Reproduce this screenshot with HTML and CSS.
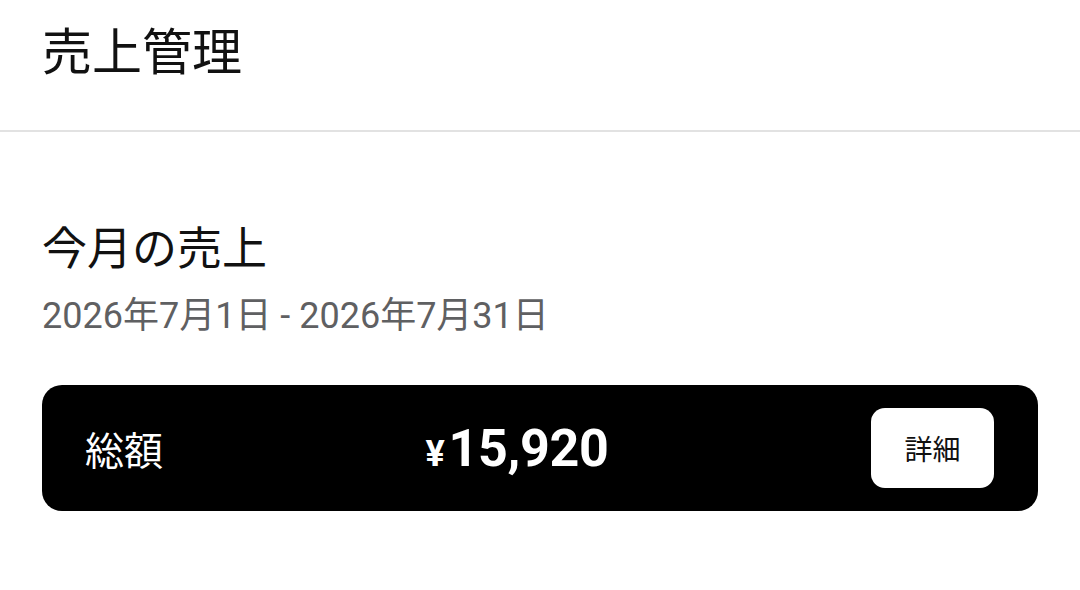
FILE: index.html
```html
<!DOCTYPE html>
<html lang="ja">
<head>
<meta charset="utf-8">
<link rel="stylesheet" href="styles.css">
</head>
<body>
<header class="topbar">
  <h1 class="title">売上管理</h1>
</header>
<main class="content">
  <h2 class="section-title">今月の売上</h2>
  <p class="period">2026年7月1日 - 2026年7月31日</p>
  <div class="total-card">
    <span class="total-label">総額</span>
    <span class="total-amount"><span class="yen">¥</span>15,920</span>
    <button class="detail-btn">詳細</button>
  </div>
</main>
</body>
</html>
```

FILE: styles.css
```css
html, body {
  margin: 0;
  padding: 0;
  background: #ffffff;
}
body {
  width: 1080px;
  height: 590px;
  overflow: hidden;
  font-family: Roboto, "Noto Sans CJK JP", sans-serif;
  color: #111;
}
.topbar {
  height: 132px;
  border-bottom: 2px solid #e2e2e2;
  box-sizing: border-box;
  display: flex;
  align-items: flex-start;
  padding: 0 42px;
}
.title {
  margin: 21px 0 0;
  font-weight: 400;
  font-size: 50px;
  line-height: 64px;
  color: #111;
}
.content {
  padding: 0 42px;
}
.section-title {
  margin: 90px 0 0;
  font-weight: 400;
  font-size: 45px;
  line-height: 56px;
  color: #111;
}
.period {
  margin: 14px 0 0;
  font-size: 36px;
  line-height: 48px;
  color: #5f6062;
}
.total-card {
  margin-top: 45px;
  background: #000;
  border-radius: 20px;
  height: 126px;
  box-sizing: border-box;
  padding: 0 44px 0 43px;
  display: flex;
  align-items: center;
  justify-content: space-between;
  color: #fff;
}
.total-label {
  font-size: 39px;
}
.total-amount {
  font-weight: 700;
  font-size: 52px;
  letter-spacing: -0.3px;
}
.yen {
  font-size: 36px;
  margin-right: 4px;
}
.detail-btn {
  background: #fff;
  border: none;
  border-radius: 14px;
  width: 123px;
  height: 80px;
  font-family: "Noto Sans CJK JP", sans-serif;
  font-size: 28px;
  color: #111;
  padding: 0;
}
```
